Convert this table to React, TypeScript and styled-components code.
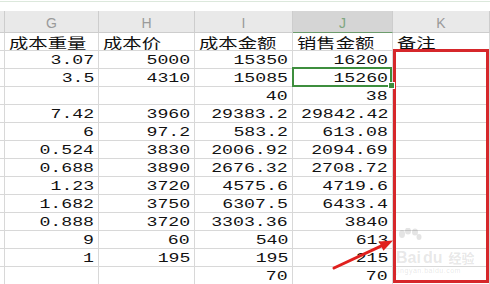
import React from 'react';
import styled, { createGlobalStyle } from 'styled-components';

const GlobalStyle = createGlobalStyle`
  html, body {
    margin: 0;
    padding: 0;
    background: #fff;
    overflow: hidden;
  }
`;

const Page = styled.div`
  position: relative;
  width: 490px;
  height: 284px;
  overflow: hidden;
  background: #fff;
`;

const TopStrip = styled.div`
  height: 10px;
  margin-top: 1px;
  border-top: 1px solid #dce8dc;
  box-sizing: border-box;
`;

const Sheet = styled.div`
  display: grid;
  grid-template-columns: 5px 94px 96px 98px 100px 97px;
  grid-template-rows: 22px repeat(14, 18px);
`;

const ColHead = styled.div<{ $active?: boolean }>`
  display: flex;
  align-items: center;
  justify-content: center;
  box-sizing: border-box;
  background: ${(p) => (p.$active ? '#d5d5d5' : '#e9e9e9')};
  border-right: 1px solid #cdcdcd;
  border-bottom: 1px solid ${(p) => (p.$active ? '#6d9c6d' : '#cdcdcd')};
  color: ${(p) => (p.$active ? '#7fa67f' : '#9a9a9a')};
  font-family: 'Liberation Sans', Arial, sans-serif;
  font-size: 14px;
  padding-top: 2px;
`;

const Cell = styled.div<{ $text?: boolean; $selected?: boolean }>`
  position: relative;
  display: flex;
  align-items: flex-end;
  justify-content: ${(p) => (p.$text ? 'flex-start' : 'flex-end')};
  box-sizing: border-box;
  border-right: 1px solid #d8d8d8;
  border-bottom: 1px solid #d8d8d8;
  padding: ${(p) => (p.$text ? '0 0 0 4px' : '0 4px 1px 0')};
  color: #111;
  white-space: nowrap;

  ${(p) =>
    p.$selected &&
    `
    &::after {
      content: '';
      position: absolute;
      top: -2px;
      left: -1px;
      right: 0;
      bottom: -1px;
      border: 2px solid #3e8e3e;
    }
    &::before {
      content: '';
      position: absolute;
      right: -3px;
      bottom: -3px;
      width: 5px;
      height: 5px;
      background: #3e8e3e;
      border: 1px solid #fff;
      z-index: 1;
    }
  `}
`;

const Num = styled.span`
  display: inline-block;
  font-family: 'Liberation Mono', 'Courier New', monospace;
  font-size: 13px;
  line-height: 13px;
  transform: scaleX(1.4);
  transform-origin: right bottom;
`;

const Label = styled.span`
  display: inline-block;
  font-family: 'Noto Sans CJK SC', 'Noto Sans', sans-serif;
  font-size: 14px;
  line-height: 15px;
  transform: scaleX(1.38);
  transform-origin: left bottom;
`;

const RedBox = styled.div`
  position: absolute;
  left: 393px;
  top: 49px;
  width: 96px;
  height: 234px;
  box-sizing: border-box;
  border: 3px solid #d6272b;
  pointer-events: none;
`;

const Overlay = styled.svg`
  position: absolute;
  left: 0;
  top: 0;
  pointer-events: none;
`;

const Watermark = styled.div`
  position: absolute;
  left: 396px;
  top: 228px;
  width: 80px;
  color: rgba(120, 120, 120, 0.18);
  pointer-events: none;
`;

const MarkRow = styled.div`
  display: flex;
  align-items: flex-end;
  gap: 2px;
  font-family: 'Liberation Sans', Arial, sans-serif;
  font-weight: bold;
  font-size: 16px;
  line-height: 16px;
`;

const MarkCjk = styled.span`
  font-family: 'Noto Sans CJK SC', sans-serif;
  font-size: 13px;
  margin-left: 4px;
`;

const MarkUrl = styled.div`
  font-family: 'Liberation Sans', Arial, sans-serif;
  font-size: 7px;
  margin-top: 1px;
  letter-spacing: 0.5px;
`;

const headers = ['成本重量', '成本价', '成本金额', '销售金额', '备注'];

const rows: string[][] = [
  ['3.07', '5000', '15350', '16200'],
  ['3.5', '4310', '15085', '15260'],
  ['', '', '40', '38'],
  ['7.42', '3960', '29383.2', '29842.42'],
  ['6', '97.2', '583.2', '613.08'],
  ['0.524', '3830', '2006.92', '2094.69'],
  ['0.688', '3890', '2676.32', '2708.72'],
  ['1.23', '3720', '4575.6', '4719.6'],
  ['1.682', '3750', '6307.5', '6433.4'],
  ['0.888', '3720', '3303.36', '3840'],
  ['9', '60', '540', '613'],
  ['1', '195', '195', '215'],
  ['', '', '70', '70'],
];

const letters = ['G', 'H', 'I', 'J', 'K'];

export default function App() {
  return (
    <Page>
      <GlobalStyle />
      <TopStrip />
      <Sheet>
        <ColHead />
        {letters.map((l) => (
          <ColHead key={l} $active={l === 'J'}>
            {l}
          </ColHead>
        ))}

        <Cell />
        {headers.map((h) => (
          <Cell key={h} $text>
            <Label>{h}</Label>
          </Cell>
        ))}

        {rows.map((r, i) => (
          <React.Fragment key={i}>
            <Cell />
            {r.map((v, j) => (
              <Cell key={j} $selected={i === 1 && j === 3}>
                {v && <Num>{v}</Num>}
              </Cell>
            ))}
            <Cell />
          </React.Fragment>
        ))}
      </Sheet>

      <Watermark>
        <svg width="26" height="18" viewBox="0 0 26 18">
          <g fill="rgba(120,120,120,0.2)">
            <ellipse cx="6" cy="6" rx="3" ry="4" />
            <ellipse cx="12" cy="3" rx="3" ry="3.5" />
            <ellipse cx="19" cy="4" rx="3" ry="3.5" />
            <ellipse cx="23" cy="9" rx="2.5" ry="3" />
          </g>
        </svg>
        <MarkRow>
          <span>Bai</span>
          <span>du</span>
          <MarkCjk>经验</MarkCjk>
        </MarkRow>
        <MarkUrl>jingyan.baidu.com</MarkUrl>
      </Watermark>

      <RedBox />

      <Overlay width="490" height="284" viewBox="0 0 490 284">
        <line x1="334" y1="268" x2="382" y2="245.6" stroke="#e0201e" strokeWidth="3" strokeLinecap="round" />
        <polygon points="393,240.5 379,241.6 383.4,250.8" fill="#e0201e" />
      </Overlay>
    </Page>
  );
}
